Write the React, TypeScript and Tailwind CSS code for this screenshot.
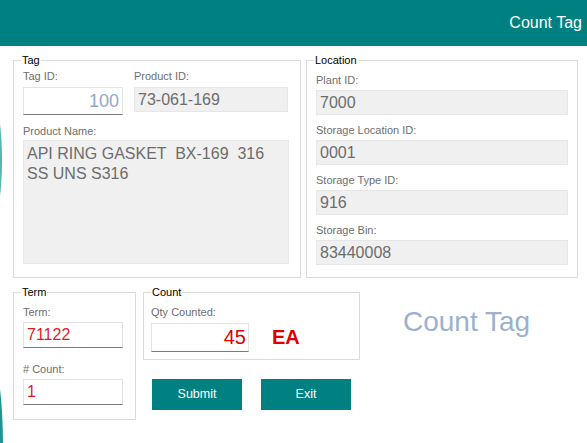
import React from "react";

const labelCls = "block h-[13px] text-[11px] leading-[13px] text-[#6e6e6e]";
const readOnlyCls =
  "flex items-center bg-[#f0f0f0] border border-[#e6e6e6] pl-[3px] text-[16px] text-[#6d6d6d]";
const editCls =
  "flex items-center bg-white border border-[#e3e3e3] border-b-[#7a7a7a] text-[16px]";

function GroupBox({
  title,
  className,
  children,
}: {
  title: string;
  className: string;
  children: React.ReactNode;
}) {
  return (
    <div className={`relative shrink-0 border border-[#dcdcdc] ${className}`}>
      <span className="absolute top-[-7px] left-[7px] bg-white px-[1px] text-[11px] leading-[13px] text-black">
        {title}
      </span>
      {children}
    </div>
  );
}

function LocationField({ label, value }: { label: string; value: string }) {
  return (
    <div className="mb-[9px]">
      <span className={`${labelCls} mb-[3px]`}>{label}</span>
      <div className={`${readOnlyCls} h-[25px] w-[252px]`}>{value}</div>
    </div>
  );
}

export default function App() {
  return (
    <div className="relative w-[587px] h-[443px] overflow-hidden bg-white font-['Liberation_Sans',Arial,sans-serif]">
      {/* decorative edge arcs from the background */}
      <div className="absolute left-[-18px] top-[100px] h-[120px] w-[20px] rounded-[50%] border-r-[2px] border-[#2f9f9f] opacity-80" />
      <div className="absolute left-[-19px] top-[362px] h-[170px] w-[22px] rounded-[50%] border-r-[3px] border-[#1f9494]" />

      {/* header */}
      <header className="relative flex h-[46px] items-center justify-end bg-[#008080] pb-[1px] pr-[5px]">
        <span className="text-[16px] text-white">Count Tag</span>
      </header>

      <main className="relative pl-[13px] pt-[14px]">
        <div className="flex gap-[5px]">
          <GroupBox title="Tag" className="h-[218px] w-[288px] pl-[9px] pt-[9px]">
            <div className="flex gap-[11px]">
              <div>
                <span className={`${labelCls} mb-[4px]`}>Tag ID:</span>
                <div className={`${editCls} h-[28px] w-[100px] justify-end pr-[3px] text-[18px] text-[#8eaacb]`}>
                  100
                </div>
              </div>
              <div>
                <span className={`${labelCls} mb-[4px]`}>Product ID:</span>
                <div className={`${readOnlyCls} h-[25px] w-[154px]`}>73-061-169</div>
              </div>
            </div>
            <span className={`${labelCls} mt-[10px] mb-[2px]`}>Product Name:</span>
            <div className="h-[124px] w-[266px] whitespace-pre-wrap border border-[#e9e9e9] bg-[#f0f0f0] pl-[3px] pt-[3px] text-[16px] leading-[20px] text-[#6d6d6d]">
              {"API RING GASKET  BX-169  316\nSS UNS S316"}
            </div>
          </GroupBox>

          <GroupBox title="Location" className="h-[218px] w-[272px] pl-[9px] pt-[13px]">
            <LocationField label="Plant ID:" value="7000" />
            <LocationField label="Storage Location ID:" value="0001" />
            <LocationField label="Storage Type ID:" value="916" />
            <LocationField label="Storage Bin:" value="83440008" />
          </GroupBox>
        </div>

        <div className="mt-[14px] flex gap-[7px]">
          <GroupBox title="Term" className="h-[128px] w-[123px] pl-[9px] pt-[13px]">
            <span className={`${labelCls} mb-[3px]`}>Term:</span>
            <div className={`${editCls} h-[26px] w-[100px] pl-[3px] text-[#d81f1f]`}>71122</div>
            <span className={`${labelCls} mt-[15px] mb-[3px]`}>
              # Count:
            </span>
            <div className={`${editCls} h-[26px] w-[100px] pl-[3px] text-[#d81f1f]`}>1</div>
          </GroupBox>

          <div className="shrink-0">
            <GroupBox title="Count" className="h-[68px] w-[217px] pl-[7px] pt-[13px]">
              <span className={`${labelCls} mb-[3px]`}>Qty Counted:</span>
              <div className="flex items-center">
                <div className={`${editCls} h-[29px] w-[98px] justify-end pr-[2px] text-[20px] text-[#e00000]`}>
                  45
                </div>
                <span className="ml-[23px] text-[20px] font-bold text-[#e00000]">EA</span>
              </div>
            </GroupBox>
            <div className="ml-[9px] mt-[19px] flex gap-[19px]">
              <button className="h-[31px] w-[90px] bg-[#008080] text-[12.5px] text-white">
                Submit
              </button>
              <button className="h-[31px] w-[90px] bg-[#008080] text-[12.5px] text-white">
                Exit
              </button>
            </div>
          </div>

          <div className="ml-[36px] mt-[14px] whitespace-nowrap text-[28px] leading-[32px] text-[#9bb1cf]">
            Count Tag
          </div>
        </div>
      </main>
    </div>
  );
}
